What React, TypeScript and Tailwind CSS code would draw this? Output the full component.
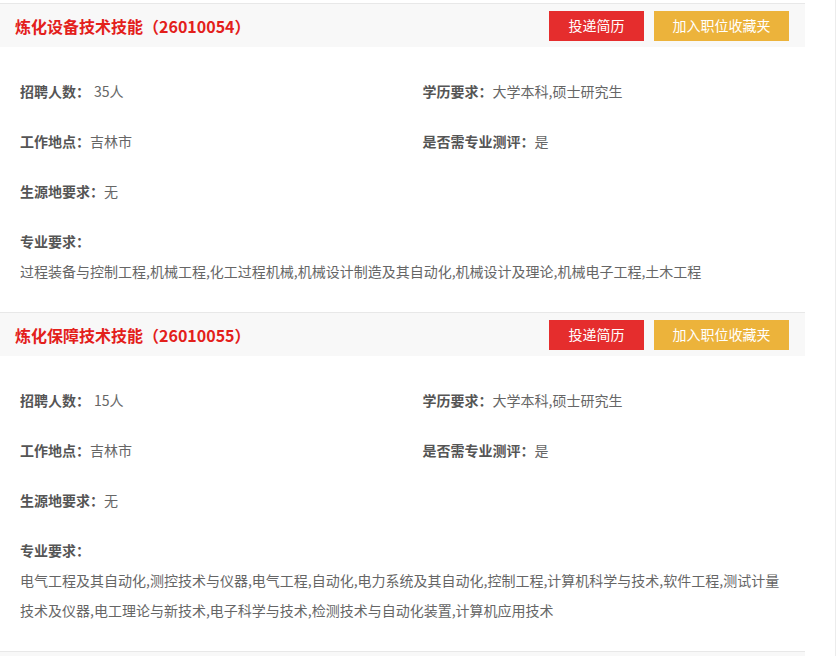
import React from 'react';

interface Job {
  title: string;
  code: string;
  count: string;
  education: string;
  location: string;
  assessment: string;
  origin: string;
  majors: string;
}

const jobs: Job[] = [
  {
    title: '炼化设备技术技能',
    code: '26010054',
    count: '35人',
    education: '大学本科,硕士研究生',
    location: '吉林市',
    assessment: '是',
    origin: '无',
    majors:
      '过程装备与控制工程,机械工程,化工过程机械,机械设计制造及其自动化,机械设计及理论,机械电子工程,土木工程',
  },
  {
    title: '炼化保障技术技能',
    code: '26010055',
    count: '15人',
    education: '大学本科,硕士研究生',
    location: '吉林市',
    assessment: '是',
    origin: '无',
    majors:
      '电气工程及其自动化,测控技术与仪器,电气工程,自动化,电力系统及其自动化,控制工程,计算机科学与技术,软件工程,测试计量技术及仪器,电工理论与新技术,电子科学与技术,检测技术与自动化装置,计算机应用技术',
  },
];

const Field: React.FC<{ label: string; value: string; spaced?: boolean }> = ({ label, value, spaced }) => (
  <div className="flex h-[50px] items-center pl-5 text-[14px]">
    <span className="font-bold text-[#555]">{label}：</span>
    <span className={spaced ? 'ml-1 text-[#666]' : 'text-[#666]'}>{value}</span>
  </div>
);

const JobCard: React.FC<{ job: Job }> = ({ job }) => (
  <div className="w-[805px] border-t border-[#e8e8e8]">
    <div className="flex h-[43px] items-center justify-between bg-[#f8f8f8] pl-[15px] pr-4">
      <h2 className="text-[16px] font-bold text-[#e3201b]">
        {job.title}（{job.code}）
      </h2>
      <div className="flex gap-[10px]">
        <button className="h-[30px] w-[95px] bg-[#e52d2d] text-[14px] text-white">投递简历</button>
        <button className="h-[30px] w-[135px] bg-[#ecb33b] text-[14px] text-white">加入职位收藏夹</button>
      </div>
    </div>
    <div className="pt-[19px] pb-[26px]">
      <div className="grid grid-cols-2">
        <Field label="招聘人数" value={job.count} spaced />
        <Field label="学历要求" value={job.education} />
        <Field label="工作地点" value={job.location} />
        <Field label="是否需专业测评" value={job.assessment} />
        <Field label="生源地要求" value={job.origin} />
      </div>
      <div className="mt-[10px] px-5 text-[14px] leading-[30px]">
        <div className="font-bold text-[#555]">专业要求：</div>
        <p className="text-[#666]">{job.majors}</p>
      </div>
    </div>
  </div>
);

export default function App() {
  return (
    <div
      className="h-[656px] w-[836px] overflow-hidden border-r border-[#ececec] bg-white pt-[3px]"
      style={{ fontFamily: '"Microsoft YaHei", "Noto Sans CJK SC", "Noto Sans", sans-serif' }}
    >
      {jobs.map((job) => (
        <JobCard key={job.code} job={job} />
      ))}
      <div className="h-[43px] w-[805px] border-t border-[#e8e8e8] bg-[#f8f8f8]" />
    </div>
  );
}
